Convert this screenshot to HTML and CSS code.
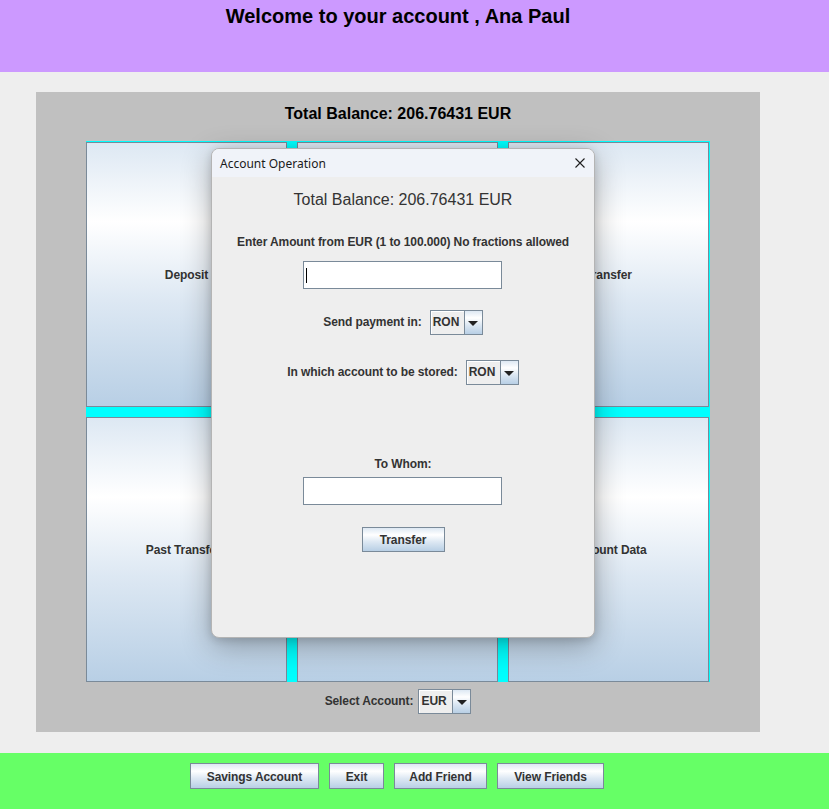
FILE: index.html
```html
<!DOCTYPE html>
<html>
<head>
<meta charset="utf-8">
<link rel="stylesheet" href="styles.css">
</head>
<body>
<header class="top">
  <div class="frame"><h1 class="welcome">Welcome to your account , Ana Paul</h1></div>
</header>
<main class="middle">
  <div class="frame">
    <section class="panel">
      <div class="balance">Total Balance: 206.76431 EUR</div>
      <div class="grid">
        <button class="btn tile">Deposit</button>
        <button class="btn tile"></button>
        <button class="btn tile">Transfer</button>
        <button class="btn tile">Past Transfers</button>
        <button class="btn tile"></button>
        <button class="btn tile">Account Data</button>
      </div>
      <div class="select-row">
        <span class="lbl">Select Account:</span>
        <div class="combo"><span class="combo-text">EUR</span><span class="combo-arrow"><span class="tri"></span></span></div>
      </div>
    </section>
  </div>
</main>
<footer class="bottom">
  <div class="frame bar">
    <button class="btn foot w1">Savings Account</button>
    <button class="btn foot w2">Exit</button>
    <button class="btn foot w3">Add Friend</button>
    <button class="btn foot w4">View Friends</button>
  </div>
</footer>

<div class="dialog">
  <div class="titlebar">
    <span class="dlg-title">Account Operation</span>
    <svg class="close" width="10" height="10" viewBox="0 0 10 10"><path d="M0.5 0.5 L9.5 9.5 M9.5 0.5 L0.5 9.5" stroke="#1f1f1f" stroke-width="1.1" fill="none"/></svg>
  </div>
  <div class="dlg-body">
    <div class="dlg-balance">Total Balance: 206.76431 EUR</div>
    <div class="lbl enter">Enter Amount from EUR (1 to 100.000) No fractions allowed</div>
    <div class="field first"><span class="caret"></span></div>
    <div class="row send">
      <span class="lbl">Send payment in:</span>
      <div class="combo"><span class="combo-text">RON</span><span class="combo-arrow"><span class="tri"></span></span></div>
    </div>
    <div class="row stored">
      <span class="lbl">In which account to be stored:</span>
      <div class="combo"><span class="combo-text">RON</span><span class="combo-arrow"><span class="tri"></span></span></div>
    </div>
    <div class="lbl whom">To Whom:</div>
    <div class="field second"></div>
    <button class="btn transfer">Transfer</button>
  </div>
</div>
</body>
</html>
```
FILE: styles.css
```css
* { box-sizing: border-box; }
html, body { margin: 0; padding: 0; }
body {
  width: 829px;
  height: 809px;
  overflow: hidden;
  position: relative;
  background: #eeeeee;
  font-family: "Liberation Sans", Arial, sans-serif;
  color: #333333;
}
.frame { width: 796px; }

.top { height: 72px; background: #cc99ff; }
.welcome {
  margin: 0;
  padding-top: 4px;
  font-size: 20px;
  line-height: 24px;
  font-weight: bold;
  color: #000;
  text-align: center;
}

.middle { height: 681px; padding-top: 20px; }
.panel {
  margin: 0 36px;
  height: 640px;
  background: #c0c0c0;
  display: flex;
  flex-direction: column;
  align-items: center;
  padding-top: 12px;
}
.balance {
  font-size: 16px;
  font-weight: bold;
  line-height: 19px;
  color: #000;
}
.grid {
  margin-top: 18px;
  width: 624px;
  height: 541px;
  padding: 1px 1px 0 0;
  background: #00ffff;
  display: grid;
  grid-template-columns: repeat(3, 201px);
  grid-template-rows: 265px 265px;
  gap: 10px;
}

.btn {
  font: bold 12px "Liberation Sans", Arial, sans-serif;
  letter-spacing: -0.1px;
  color: #333333;
  border: 1px solid #7a8a99;
  background: linear-gradient(to bottom, #dde8f3 0%, #ffffff 30%, #dde8f3 60%, #b8cfe5 100%);
  padding: 0;
  margin: 0;
}
.tile { width: 201px; height: 265px; }

.select-row {
  margin-top: 7px;
  display: flex;
  align-items: center;
  gap: 5px;
}
.lbl {
  font-size: 12px;
  font-weight: bold;
  line-height: 15px;
  letter-spacing: -0.1px;
  color: #333333;
}

.combo {
  display: flex;
  width: 53px;
  height: 25px;
  border: 1px solid #7a8a99;
  background: #eeeeee;
}
.combo-text {
  width: 33px;
  font-size: 12px;
  font-weight: bold;
  line-height: 23px;
  padding-left: 2px;
  color: #333333;
  box-shadow: inset 1px 1px 0 #ffffff;
}
.combo-arrow {
  flex: 1;
  border-left: 1px solid #7a8a99;
  background: linear-gradient(to bottom, #dde8f3 0%, #ffffff 30%, #dde8f3 60%, #b8cfe5 100%);
  display: flex;
  align-items: center;
  justify-content: center;
}
.tri {
  width: 0;
  height: 0;
  border-left: 5px solid transparent;
  border-right: 5px solid transparent;
  border-top: 5px solid #222222;
  margin-top: 1px;
}

.bottom { height: 56px; background: #66ff66; }
.bar {
  display: flex;
  justify-content: center;
  gap: 10px;
  padding-top: 10px;
  padding-right: 2px;
}
.foot { height: 26px; padding-top: 2px; }
.w1 { width: 129px; }
.w2 { width: 55px; }
.w3 { width: 93px; }
.w4 { width: 107px; }

/* dialog window overlay */
.dialog {
  position: absolute;
  left: 211px;
  top: 148px;
  width: 384px;
  height: 490px;
  border: 1px solid #b4b4b4;
  border-radius: 8px;
  background: #eeeeee;
  overflow: hidden;
  box-shadow: 0 8px 30px rgba(0, 0, 0, 0.30), 0 2px 8px rgba(0, 0, 0, 0.14);
}
.titlebar {
  height: 28px;
  background: #f0f3f9;
  display: flex;
  align-items: center;
  justify-content: space-between;
  padding: 0 9px 0 8px;
}
.dlg-title {
  font-family: "Noto Sans", "Open Sans", sans-serif;
  font-size: 12px;
  color: #1a1a1a;
}
.close { display: block; }
.dlg-body {
  display: flex;
  flex-direction: column;
  align-items: center;
}
.dlg-balance {
  margin-top: 13px;
  font-size: 16px;
  line-height: 19px;
  color: #333333;
}
.enter { margin-top: 26px; }
.field {
  width: 199px;
  height: 28px;
  background: #ffffff;
  border: 1px solid #7a8a99;
  box-shadow: inset -1px -1px 0 #ffffff;
  display: flex;
  align-items: center;
  padding-left: 2px;
}
.field.first { margin-top: 11px; margin-right: 2px; }
.field.second { margin-top: 5px; margin-right: 2px; }
.caret { width: 1px; height: 15px; background: #000; }
.row {
  display: flex;
  align-items: center;
  gap: 8px;
}
.send { margin-top: 21px; }
.stored { margin-top: 25px; }
.whom { margin-top: 72px; }
.transfer {
  margin-top: 22px;
  width: 83px;
  height: 25px;
  padding-top: 1px;
}
```
